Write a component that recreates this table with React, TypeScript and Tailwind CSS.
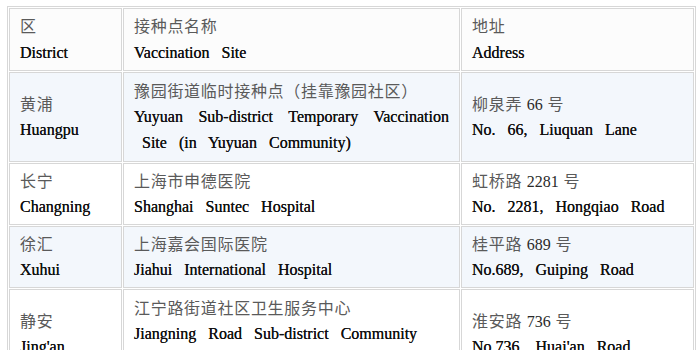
import React from "react";

type Row = {
  d: [string, string];
  s: string[];
  sEn: { text: string; justify?: boolean; indent?: boolean }[];
  a: [string, string, string];
  aEn: string;
  h: string;
  blue: boolean;
};

const zh = "text-[#5a5a5a] tracking-[0.7px]";
const en = "text-[#111111] [word-spacing:8px] [text-shadow:0_0_0.4px_#111]";

const rows: Row[] = [
  {
    d: ["黄浦", "Huangpu"],
    s: ["豫园街道临时接种点（挂靠豫园社区）"],
    sEn: [
      { text: "Yuyuan Sub-district Temporary Vaccination", justify: true },
      { text: "Site (in Yuyuan Community)", indent: true },
    ],
    a: ["柳泉弄", "66", "号"],
    aEn: "No. 66, Liuquan Lane",
    h: "h-[90px]",
    blue: true,
  },
  {
    d: ["长宁", "Changning"],
    s: ["上海市申德医院"],
    sEn: [{ text: "Shanghai Suntec Hospital" }],
    a: ["虹桥路", "2281", "号"],
    aEn: "No. 2281, Hongqiao Road",
    h: "h-[62px]",
    blue: false,
  },
  {
    d: ["徐汇", "Xuhui"],
    s: ["上海嘉会国际医院"],
    sEn: [{ text: "Jiahui International Hospital" }],
    a: ["桂平路", "689", "号"],
    aEn: "No.689, Guiping Road",
    h: "h-[62px]",
    blue: true,
  },
  {
    d: ["静安", "Jing'an"],
    s: ["江宁路街道社区卫生服务中心"],
    sEn: [
      { text: "Jiangning Road Sub-district Community" },
      { text: "Health Service Center" },
    ],
    a: ["淮安路", "736", "号"],
    aEn: "No.736, Huai'an Road",
    h: "h-[90px]",
    blue: false,
  },
];

export default function App() {
  const cell = "border border-[#d7d7d7] px-[10px] align-middle text-left font-normal";
  return (
    <div
      className="w-[700px] h-[350px] overflow-hidden bg-white pt-[6px] pl-[7px]"
      style={{ fontFamily: '"Liberation Serif", "Noto Sans CJK SC", serif' }}
    >
      <table className="table-fixed w-[689px] border border-[#d7d7d7] border-separate border-spacing-[1px] text-[16px] leading-[25.5px]">
        <colgroup>
          <col className="w-[113px]" />
          <col className="w-[337px]" />
          <col className="w-[233px]" />
        </colgroup>
        <thead>
          <tr className="h-[63px]">
            <th className={`${cell} bg-[#fcfcfc]`}>
              <div className={zh}>区</div>
              <div className={en}>District</div>
            </th>
            <th className={`${cell} bg-[#fcfcfc]`}>
              <div className={zh}>接种点名称</div>
              <div className={en}>Vaccination Site</div>
            </th>
            <th className={`${cell} bg-[#fcfcfc]`}>
              <div className={zh}>地址</div>
              <div className={en}>Address</div>
            </th>
          </tr>
        </thead>
        <tbody>
          {rows.map((r, i) => {
            const bg = r.blue ? "bg-[#f3f7fc]" : "bg-white";
            return (
              <tr key={i} className={r.h}>
                <td className={`${cell} ${bg}`}>
                  <div className={zh}>{r.d[0]}</div>
                  <div className={en}>{r.d[1]}</div>
                </td>
                <td className={`${cell} ${bg}`}>
                  {r.s.map((t, j) => (
                    <div key={j} className={`${zh} whitespace-nowrap`}>
                      {t}
                    </div>
                  ))}
                  {r.sEn.map((l, j) => (
                    <div
                      key={j}
                      className={`${en} whitespace-nowrap ${l.justify ? "text-justify [text-align-last:justify]" : ""} ${l.indent ? "pl-[8px]" : ""}`}
                    >
                      {l.text}
                    </div>
                  ))}
                </td>
                <td className={`${cell} ${bg}`}>
                  <div className={zh}>
                    {r.a[0]} <span className="text-[#2a2a2a] tracking-normal">{r.a[1]}</span> {r.a[2]}
                  </div>
                  <div className={en}>{r.aEn}</div>
                </td>
              </tr>
            );
          })}
        </tbody>
      </table>
    </div>
  );
}
